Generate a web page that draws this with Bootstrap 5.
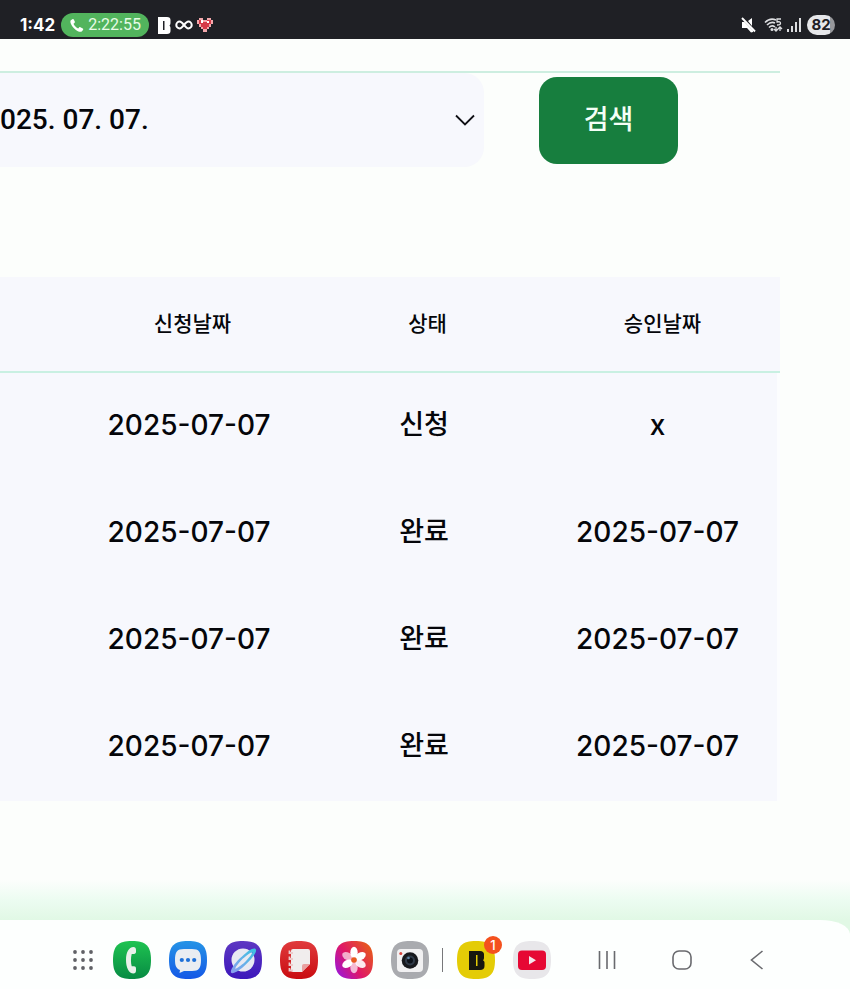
<!DOCTYPE html>
<html lang="ko">
<head>
    <meta charset="UTF-8">
    <meta name="viewport" content="width=device-width, initial-scale=1.0">
    <title>신청 내역</title>
    <!-- Bootstrap CSS -->
    <link href="https://cdn.jsdelivr.net/npm/bootstrap@5.3.3/dist/css/bootstrap.min.css" rel="stylesheet">
    <style>
        body {
            font-family: Inter, "Noto Sans CJK KR", sans-serif;
            background: #fcfefc;
            color: #05060a;
        }
        svg {
            display: block;
            flex: none;
        }
        /* status bar */
        .estado {
            background: #1f2025;
            color: #fff;
            padding: 12px 15px 1px 20px;
            height: 39px;
            line-height: 24px;
        }
        .hora {
            font-size: 17px;
            font-weight: 700;
        }
        .llamada {
            background: #52b45d;
            color: #e8fbe6;
            font: 400 16px/24px Roboto, sans-serif;
            padding: 0 8px;
            margin: 0 8px 0 6px;
        }
        .bateria {
            background: linear-gradient(90deg, #e6e7ea 82%, #97989c 82%);
            color: #1f2025;
            font-size: 15px;
            font-weight: 700;
            line-height: 20px;
            width: 28px;
            margin-left: 6px;
        }
        /* page content */
        .contenido {
            padding: 32px 70px 0 0;
        }
        .filtro {
            border-top: 2px solid #cdeee0;
            padding-right: 102px;
            gap: 55px;
        }
        .fecha {
            background-color: #f7f8fd;
            background-image: url("data:image/svg+xml,%3csvg xmlns='http://www.w3.org/2000/svg' viewBox='0 0 20 12'%3e%3cpath fill='none' stroke='%23101015' stroke-width='1.8' d='M1 1.5l9 9 9-9'/%3e%3c/svg%3e");
            background-size: 20px 12px;
            background-position: right 9px center;
            border: 0;
            border-radius: 0 20px 20px 0;
            color: #05060a;
            font: 500 28px/34px Roboto, sans-serif;
            height: 94px;
            padding: 0 40px 0 0;
        }
        .buscar, .buscar:hover {
            background: #177e3e;
            color: #f4fff6;
            border: 0;
            border-radius: 18px;
            font-size: 27px;
            font-weight: 500;
            line-height: 40px;
            width: 139px;
            height: 87px;
            flex: none;
            padding: 0;
        }
        .lista {
            table-layout: fixed;
            border-collapse: separate;
            border-spacing: 0;
            margin: 110px 0 0;
            text-align: center;
            --bs-table-bg: #f7f8fd;
            --bs-table-color: #05060a;
        }
        .lista th, .lista td {
            padding: 0;
            border: 0;
            font-weight: 500;
            vertical-align: middle;
        }
        .lista th {
            height: 96px;
            font-size: 21px;
            line-height: 30px;
            border-bottom: 2px solid #c9f0e2;
        }
        .lista td {
            height: 107px;
            font-size: 28px;
            line-height: 40px;
            padding: 0 7px 3px 0;
        }
        .lista td:nth-child(3) {
            font-size: 27px;
        }
        .lista td:last-child {
            border-right: 3px solid #fcfdfe;
        }
        .margen {
            width: 75px;
        }
        /* dock */
        .fondo {
            background: linear-gradient(#fcfefc, #ecfcf1 20px, #e1f8e5 40px);
            padding-top: 40px;
        }
        .dock {
            background: #fdfffe;
            border-top-right-radius: 30px 14px;
            padding: 21px 20px 10px 73px;
        }
        .dock .btn {
            padding: 0;
            border: 0;
        }
        .apps {
            width: 316px;
            margin-left: 20px;
        }
        .raya {
            width: 1px;
            height: 24px;
            background: #77787a;
            margin: 0 14px 0 13px;
        }
        .recientes {
            gap: 18px;
        }
        .aviso {
            background: #f4511e;
            color: #fff;
            font-size: 13px;
            font-weight: 500;
            line-height: 18px;
            width: 18px;
            height: 18px;
            top: -5px;
            right: -7px;
        }
        .teclas {
            gap: 55px;
            margin-left: 46px;
        }
    </style>
</head>
<body class="d-flex flex-column min-vh-100 overflow-hidden">

    <header class="estado d-flex align-items-center">
        <span class="hora">1:42</span>
        <span class="llamada d-flex align-items-center gap-1 rounded-pill">
            <svg width="15" height="15" viewBox="0 0 15 15"><path fill="#fff" d="M3.4 1.2 1.8 2.3C.8 3.5 1.6 6.7 4.7 9.9s6.600 4.600 8 3.600l1.300-1.600c.4-.5.2-1-.2-1.300l-2.400-1.400c-.5-.3-1-.2-1.300.2l-.9 1C7.300 9.600 5.300 7.600 4.500 5.700l1-.8c.4-.4.5-.8.3-1.300L4.700 1.500c-.3-.5-.8-.6-1.300-.3z"/></svg>
            <span>2:22:55</span>
        </span>
        <svg width="14" height="17" viewBox="0 0 14 17"><path fill="#fff" fill-rule="evenodd" d="M1 0h9q3.500 0 3.500 3v3q0 1.500-1 2.500 1 1 1 2.500v3q0 3-3.500 3H1zM6 4v9h1.500V4z"/></svg>
        <svg class="mx-1" width="18" height="12" viewBox="0 0 20 12"><path fill="none" stroke="#fff" stroke-width="2.200" d="M10 6C8 3.500 7 2.200 5.200 2.200a3.700 3.700 0 0 0 0 7.600C7 9.800 8 8.500 10 6s3-3.800 4.800-3.800a3.700 3.700 0 0 1 0 7.600C13 9.800 12 8.500 10 6z"/></svg>
        <svg width="16" height="14" viewBox="0 0 16 14"><path fill="#f4a8ac" d="M2 0h4v2h4V0h4v2h2v4h-2v3h-2v2h-2v3H6v-3H4V9H2V6H0V2h2z"/><path fill="#d63947" d="M2 2h4v2h4V2h4v4h-2v3h-2v2H6V9H4V6H2z"/><path fill="#fff" d="M4 2h2v3H4zM10 3h2v2h-2z"/></svg>

        <div class="d-flex align-items-center gap-1 ms-auto">
            <svg width="16" height="16" viewBox="0 0 16 16"><path fill="#fff" d="M2 5h2.500L13 13.500V15l-2 .5L7 11H2zM8 4l4-3v8z"/><path stroke="#fff" stroke-width="1.900" d="m2 1 13 13.500"/></svg>
            <svg class="ms-1" width="19" height="16" viewBox="0 0 19 16"><g fill="none" stroke="#dedfe2" stroke-width="1.600"><path d="M1 5.500Q6 .5 12 3M3 8q4-4 8-2M5 10.500q3-3 6-.5"/><path d="M17 2h-4v3q3.500-.8 3.500 1.200T13 8M12 10v4m-2-2 2 2 2-2M16 14v-4m-2 2 2-2 2 2" stroke-width="1.300"/></g><circle cx="8" cy="12.500" r="1.500" fill="#dedfe2"/></svg>
            <svg width="14" height="14" viewBox="0 0 14 14"><path stroke="#e6e7ea" stroke-width="1.900" d="M1 14v-3M5 14V8M9 14V4M13 14V0"/></svg>
        </div>
        <span class="bateria rounded-pill text-center">82</span>
    </header>

    <main class="contenido flex-grow-1">
        <form class="filtro d-flex align-items-center">
            <label class="visually-hidden" for="fecha">날짜</label>
            <select class="form-select fecha" id="fecha">
                <option>025. 07. 07.</option>
            </select>
            <button type="button" class="btn buscar">검색</button>
        </form>

        <table class="table lista">
            <colgroup>
                <col class="margen"><col><col><col>
            </colgroup>
            <thead>
                <tr><th></th><th scope="col">신청날짜</th><th scope="col">상태</th><th scope="col">승인날짜</th></tr>
            </thead>
            <tbody>
                <tr><td></td><td>2025-07-07</td><td>신청</td><td>x</td></tr>
                <tr><td></td><td>2025-07-07</td><td>완료</td><td>2025-07-07</td></tr>
                <tr><td></td><td>2025-07-07</td><td>완료</td><td>2025-07-07</td></tr>
                <tr><td></td><td>2025-07-07</td><td>완료</td><td>2025-07-07</td></tr>
            </tbody>
        </table>
    </main>

    <footer class="fondo">
        <nav class="dock d-flex align-items-center">
            <button type="button" class="btn" aria-label="앱">
                <svg width="20" height="20" viewBox="0 0 20 20" fill="#606166"><circle cx="2" cy="2" r="1.900"/><circle cx="10" cy="2" r="1.900"/><circle cx="18" cy="2" r="1.900"/><circle cx="2" cy="10" r="1.900"/><circle cx="10" cy="10" r="1.900"/><circle cx="18" cy="10" r="1.900"/><circle cx="2" cy="18" r="1.900"/><circle cx="10" cy="18" r="1.900"/><circle cx="18" cy="18" r="1.900"/></svg>
            </button>

            <div class="apps d-flex justify-content-between">
                <button type="button" class="btn" aria-label="전화">
                    <svg width="38" height="38" viewBox="0 0 38 38"><defs><linearGradient id="verde" x2="0" y2="1"><stop stop-color="#1fc351"/><stop offset="1" stop-color="#078b43"/></linearGradient></defs><path fill="url(#verde)" d="M19 0C33 0 38 5 38 19S33 38 19 38 0 33 0 19 5 0 19 0z"/><path fill="#e9f0ea" d="M20.500 6c-4.800 0-7.500 5.500-7.500 13s2.700 13.500 7.500 13.500c1.600 0 2.500-1 2.500-3v-2c0-1.500-.8-2.200-2-2.200h-2.300c-1-3.600-1-8.900 0-12.400H21c1.300 0 2-.8 2-2.200V9c0-2-.9-3-2.500-3z"/></svg>
                </button>
                <button type="button" class="btn" aria-label="메시지">
                    <svg width="38" height="38" viewBox="0 0 38 38"><defs><linearGradient id="azul" x2="0" y2="1"><stop stop-color="#2594e6"/><stop offset="1" stop-color="#1458e6"/></linearGradient></defs><path fill="url(#azul)" d="M19 0C33 0 38 5 38 19S33 38 19 38 0 33 0 19 5 0 19 0z"/><path fill="#e9edf2" d="M15 8h8c7 0 9 3 9 11s-2 11-9 11h-8l-4.500 2 .5-3C7.500 27.500 6 25 6 19c0-8 2-11 9-11z"/><g fill="#1d70d8"><circle cx="12.800" cy="19" r="2.100"/><circle cx="19" cy="19" r="2.100"/><circle cx="25.200" cy="19" r="2.100"/></g></svg>
                </button>
                <button type="button" class="btn" aria-label="인터넷">
                    <svg width="38" height="38" viewBox="0 0 38 38"><defs><linearGradient id="morado" x2="0" y2="1"><stop stop-color="#5d38c2"/><stop offset="1" stop-color="#3c17bb"/></linearGradient><linearGradient id="anillo" x1="0" y1="1" x2="1" y2="0"><stop stop-color="#8d9df0"/><stop offset="1" stop-color="#39c4e0"/></linearGradient></defs><path fill="url(#morado)" d="M19 0C33 0 38 5 38 19S33 38 19 38 0 33 0 19 5 0 19 0z"/><circle cx="19" cy="19" r="11.500" fill="#e8e9f2"/><path fill="url(#anillo)" d="M25 9.500C29 7 32.500 6.500 32 10c-.8 4-8 12-14 17-5 4-10 6.500-11 4.500-1-3 5-11 11-16 2.500-2.500 5-4.500 7-6zM11 28c3-1 8-5 11-8s6-7 6.500-9c-3 1-8 5-11 8s-6 7-6.500 9z" fill-rule="evenodd"/><path fill="#e8e9f2" d="M12 27c2-4 10-12 15-15-2 4-10 12-15 15z"/></svg>
                </button>
                <button type="button" class="btn" aria-label="노트">
                    <svg width="38" height="38" viewBox="0 0 38 38"><defs><linearGradient id="rojo" x2="0" y2="1"><stop stop-color="#e03b3d"/><stop offset="1" stop-color="#c90c10"/></linearGradient></defs><path fill="url(#rojo)" d="M19 0C33 0 38 5 38 19S33 38 19 38 0 33 0 19 5 0 19 0z"/><path fill="#f0eded" d="M13 8h15q2 0 2 2v13l-8 8H13q-2 0-2-2V10q0-2 2-2z"/><path fill="#e9a0a0" d="M24 23h6l-8 8v-6q0-2 2-2z"/><g fill="none" stroke="#eccaca" stroke-width="1.800"><path d="M13 12H9.500v-2.500M13 18H9.500v-2.500M13 24H9.500v-2.500M13 29.500H9.500V27"/></g></svg>
                </button>
                <button type="button" class="btn" aria-label="갤러리">
                    <svg width="38" height="38" viewBox="0 0 38 38"><defs><linearGradient id="flor" x1="0" y1="1" x2="1" y2=".3"><stop stop-color="#8e18ee"/><stop offset=".5" stop-color="#df1768"/><stop offset="1" stop-color="#e65620"/></linearGradient></defs><path fill="url(#flor)" d="M19 0C33 0 38 5 38 19S33 38 19 38 0 33 0 19 5 0 19 0z"/><g fill="#fff"><ellipse cx="19" cy="11.500" rx="3.700" ry="5.700"/><ellipse cx="19" cy="11.500" rx="3.700" ry="5.700" transform="rotate(60 19 19)"/><ellipse cx="19" cy="11.500" rx="3.700" ry="5.700" transform="rotate(120 19 19)" opacity=".9"/><ellipse cx="19" cy="11.500" rx="3.700" ry="5.700" transform="rotate(180 19 19)" opacity=".7"/><ellipse cx="19" cy="11.500" rx="3.700" ry="5.700" transform="rotate(240 19 19)"/><ellipse cx="19" cy="11.500" rx="3.700" ry="5.700" transform="rotate(300 19 19)" opacity=".65"/></g><circle cx="19" cy="19" r="2.800" fill="#e85a20"/></svg>
                </button>
                <button type="button" class="btn" aria-label="카메라">
                    <svg width="38" height="38" viewBox="0 0 38 38"><path fill="#a9abaf" d="M19 0C33 0 38 5 38 19S33 38 19 38 0 33 0 19 5 0 19 0z"/><rect x="6" y="8" width="26" height="23" rx="4" fill="#f1f1f2"/><circle cx="9.800" cy="12.500" r="1.500" fill="#d8453d"/><circle cx="19" cy="19.500" r="8.300" fill="#17191d"/><circle cx="19" cy="19.500" r="5" fill="#303b49"/><circle cx="19" cy="19.500" r="3" fill="#0c1119"/><circle cx="17.500" cy="17" r="1.300" fill="#5f86a6"/></svg>
                </button>
            </div>

            <div class="raya"></div>

            <div class="recientes d-flex">
                <button type="button" class="btn position-relative" aria-label="B, 알림 1개">
                    <svg width="38" height="38" viewBox="0 0 38 38"><path fill="#e4cc06" d="M19 0C33 0 38 5 38 19S33 38 19 38 0 33 0 19 5 0 19 0z"/><path fill="#17170f" fill-rule="evenodd" d="M12 10h11q4 0 4 3.500V17q0 1.500-1 2.300 1.500.7 1.500 2.200V25q0 4-4.500 4H12zM19 14v11h1.500V14z"/></svg>
                    <span class="aviso position-absolute rounded-circle">1</span>
                </button>
                <button type="button" class="btn" aria-label="YouTube">
                    <svg width="38" height="38" viewBox="0 0 38 38"><path fill="#e8e7ea" d="M19 0C33 0 38 5 38 19S33 38 19 38 0 33 0 19 5 0 19 0z"/><rect x="5" y="9.500" width="28" height="19.500" rx="4" fill="#e60834"/><path fill="#f4e8ec" d="M16 15v8.500l7-4.200z"/></svg>
                </button>
            </div>

            <div class="teclas d-flex">
                <button type="button" class="btn" aria-label="최근 앱">
                    <svg width="20" height="20" viewBox="0 0 20 20"><path stroke="#696a6e" stroke-width="1.600" d="M2.500 1v18M10 1v18M17.500 1v18"/></svg>
                </button>
                <button type="button" class="btn" aria-label="홈">
                    <svg width="20" height="20" viewBox="0 0 20 20"><rect x="1" y="1" width="18" height="18" rx="6" fill="none" stroke="#696a6e" stroke-width="1.600"/></svg>
                </button>
                <button type="button" class="btn" aria-label="뒤로">
                    <svg width="20" height="20" viewBox="0 0 20 20"><path fill="none" stroke="#696a6e" stroke-width="1.600" d="M15.500 1 4.500 10l11 9"/></svg>
                </button>
            </div>
        </nav>
    </footer>

    <!-- Bootstrap JS Bundle -->
    <script src="https://cdn.jsdelivr.net/npm/bootstrap@5.3.3/dist/js/bootstrap.bundle.min.js"></script>
</body>
</html>
